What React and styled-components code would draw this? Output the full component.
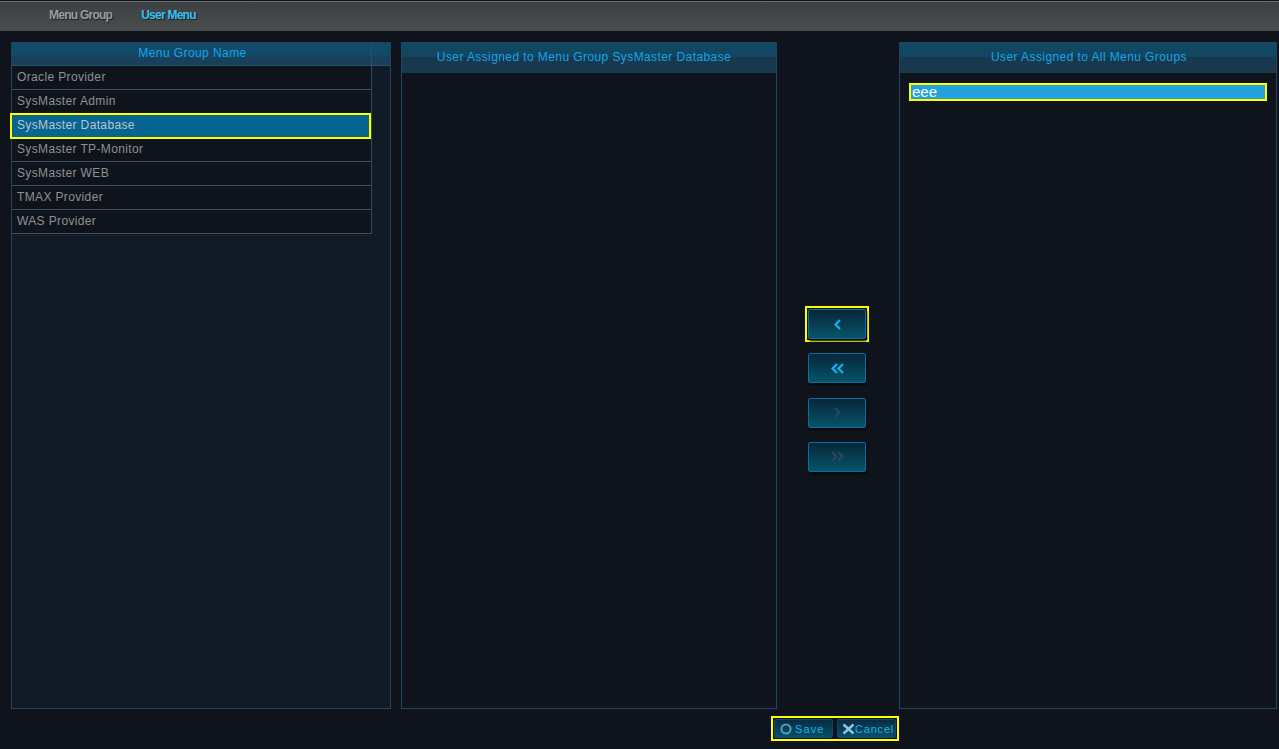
import React from "react";
import styled, { createGlobalStyle } from "styled-components";

const Global = createGlobalStyle`
  html, body { margin: 0; padding: 0; background: #0f141c; }
  body { font-family: "Liberation Sans", Arial, sans-serif; overflow: hidden; }
`;
const Page = styled.div`
  width: 1279px; height: 749px; display: flex; flex-direction: column; background: #0f141c; overflow: hidden;
`;
const TabBar = styled.div`
  height: 30px; margin-top: 1px; flex: none; display: flex; align-items: center; box-sizing: border-box;
  padding: 0 0 4px 49px; gap: 29px;
  border-top: 1px solid #6b6f72;
  background: linear-gradient(#3c4143, #4a4d4d);
`;
const Tab = styled.div`
  font-size: 12px; font-weight: 700; letter-spacing: -0.75px;
  color: ${p => (p.$active ? "#36c0f4" : "#9a9d9f")};
  text-shadow: 1px 1px 1px #1b1e20;
`;
const Main = styled.div`
  display: flex; height: 667px; margin: 11px 0 0 11px; flex: none;
`;
const Panel = styled.section`
  box-sizing: border-box; width: ${p => p.$w}px; flex: none; display: flex; flex-direction: column;
  border: 1px solid #1d4560; background: ${p => p.$bg || "#0f141c"};
`;
const HeaderRow = styled.div`
  display: flex; height: 23px; flex: none; box-sizing: border-box; border-bottom: 1px solid #24506b;
  background: linear-gradient(#124a69 0, #124a69 10px, #18405a 16px, #18405a 100%);
`;
const HeaderCell = styled.div`
  width: 360px; flex: none; box-sizing: border-box; border-right: 1px solid #24506b; padding-left: 2px;
  text-align: center; font: 12px/20px "Liberation Sans", sans-serif; letter-spacing: .42px; color: #11a5e8;
`;
const Tall = styled.div`
  height: 30px; flex: none; box-sizing: border-box; border-bottom: 1px solid #123c54;
  padding: ${p => p.$pad || "0"};
  background: linear-gradient(#114763 0, #114763 14px, #18384d 14px, #18384d 100%);
  text-align: center; font: 12px/28px "Liberation Sans", sans-serif; letter-spacing: .41px; color: #11a5e8;
`;
const List = styled.div`
  width: 360px; box-sizing: border-box; background: #0f141c; border-right: 1px solid #24506b;
`;
const Row = styled.div`
  height: 24px; box-sizing: border-box; padding-left: 5px;
  font: 12px/22px "Liberation Sans", sans-serif; letter-spacing: .36px; color: #8d9093;
  border-bottom: 1px solid #3a4f60;
  ${p => p.$sel && `
    background: #066591; color: #b9c4cb; border: 2px solid #ffff00; margin: -1px 0 -1px -2px; padding-left: 5px;
    height: 26px; width: 361px; line-height: 21px; position: relative;
  `}
`;
const Spacer = styled.div`width: 10px; flex: none;`;
const Mover = styled.div`
  width: 122px; flex: none; display: flex; flex-direction: column; align-items: center; gap: 14.33px;
  padding: 267px 2px 0 0; box-sizing: border-box;
`;
const FocusFrame = styled.div`
  display: flex; border: 2px solid #ffff00; padding: 1px; margin: -3px;
`;
const MoveButton = styled.button`
  width: 58px; height: 30px; box-sizing: border-box; padding: 0; display: flex; align-items: center; justify-content: center;
  border: 1px solid #0a6e9f; border-radius: 2px; background: linear-gradient(#07263a, #075468);
  box-shadow: 1px 2px 2px #05080c;
`;
const UserRow = styled.div`
  margin: 10px 9px 0 9px; height: 18px; box-sizing: border-box; border: 2px solid #ffff00; background: #24a0dc;
  color: #fff; font: 15px/13px "Liberation Sans", sans-serif; padding-left: 1px;
`;
const Footer = styled.div`
  display: flex; margin: 7px 0 0 771px; width: 128px; height: 25px; box-sizing: border-box; border: 2px solid #ffff00; padding: 1px; gap: 4px; flex: none;
`;
const ActionButton = styled.button`
  flex: ${p => p.$w}px 0 0; height: 19px; box-sizing: border-box; padding: 1px 0 0 ${p => p.$pad}px; display: flex; align-items: center; gap: ${p => p.$gap}px;
  border: 1px solid #0a4c70; border-radius: 2px; background: linear-gradient(#0a2c42, #065068);
  color: #19b2ea; font: 11px "Liberation Sans", sans-serif; letter-spacing: ${p => p.$ls}px;
`;
const Chevron = ({ dir, double, dim }) => {
  const c = dim ? "#2b4763" : "#0fb4ee";
  const d = dir === "l" ? "M7 1 L2.5 5.5 L7 10" : "M2 1 L6.5 5.5 L2 10";
  return (
    <svg width={double ? 14 : 9} height="11" viewBox={double ? "0 0 14 11" : "0 0 9 11"} fill="none" stroke={c} strokeWidth="2.2">
      <path d={d} />
      {double && <path d={d} transform="translate(6 0)" />}
    </svg>
  );
};
const groups = ["Oracle Provider", "SysMaster Admin", "SysMaster Database", "SysMaster TP-Monitor", "SysMaster WEB", "TMAX Provider", "WAS Provider"];

export default function App() {
  return (
    <Page>
      <Global />
      <TabBar><Tab>Menu Group</Tab><Tab $active>User Menu</Tab></TabBar>
      <Main>
        <Panel $w={380} $bg="#121a26">
          <HeaderRow><HeaderCell>Menu Group Name</HeaderCell></HeaderRow>
          <List>{groups.map((g, i) => <Row key={g} $sel={i === 2}>{g}</Row>)}</List>
        </Panel>
        <Spacer />
        <Panel $w={376}><Tall $pad="0 10px 0 0">User Assigned to Menu Group SysMaster Database</Tall></Panel>
        <Mover>
          <FocusFrame><MoveButton aria-label="add"><Chevron dir="l" /></MoveButton></FocusFrame>
          <MoveButton aria-label="add all"><Chevron dir="l" double /></MoveButton>
          <MoveButton aria-label="remove"><Chevron dir="r" dim /></MoveButton>
          <MoveButton aria-label="remove all"><Chevron dir="r" double dim /></MoveButton>
        </Mover>
        <Panel $w={378}><Tall $pad="0 0 0 2px">User Assigned to All Menu Groups</Tall><UserRow>eee</UserRow></Panel>
      </Main>
      <Footer>
        <ActionButton $w={59} $pad={5} $gap={3} $ls={1.1}>
          <svg width="12" height="12" viewBox="0 0 12 12" fill="none"><circle cx="6" cy="6" r="4.6" stroke="#4d9fc4" strokeWidth="2" /></svg>
          Save
        </ActionButton>
        <ActionButton $w={59} $pad={4} $gap={0} $ls={.8}>
          <svg width="13" height="12" viewBox="0 0 13 12" fill="none" stroke="#8fc6df" strokeWidth="2.4"><path d="M1.5 1.5 L11.5 10.5 M11.5 1.5 L1.5 10.5" /></svg>
          Cancel
        </ActionButton>
      </Footer>
    </Page>
  );
}
